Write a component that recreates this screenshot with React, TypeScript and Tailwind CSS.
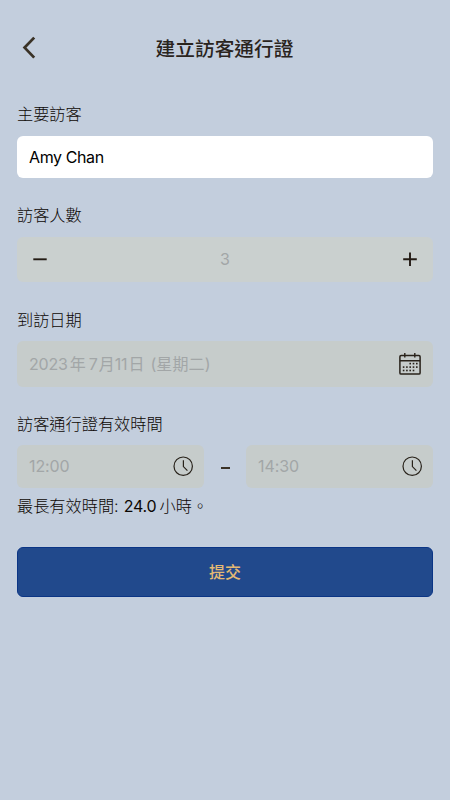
import { ReactNode, useState } from "react";

type FieldProps = {
	label: string;
	className?: string;
	children: ReactNode;
};

const Field = ({ label, className = "", children }: FieldProps) => {
	return (
		<section className={className}>
			<h2 className="h-6 text-[16.2px] leading-6 font-light text-[#0c0703]">{label}</h2>
			{children}
		</section>
	);
};

const BackIcon = () => (
	<svg width="14" height="24" viewBox="0 0 14 24" fill="none">
		<path d="M12.2 1.6 2.6 11.6l9.6 10" stroke="#3a3226" strokeWidth="2.8" />
	</svg>
);

const MinusIcon = () => (
	<svg width="14" height="14" viewBox="0 0 14 14" fill="none">
		<path d="M0.3 7.3h13.4" stroke="#231b14" strokeWidth="1.9" />
	</svg>
);

const PlusIcon = () => (
	<svg width="14" height="14" viewBox="0 0 14 14" fill="none">
		<path d="M0.2 7.3h13.6M7 0.5v13.5" stroke="#231b14" strokeWidth="1.9" />
	</svg>
);

// Filled days of the little calendar, one array of x positions per row
const calendarDays = [
	{ y: 10.6, xs: [10.5, 13.8, 17.1] },
	{ y: 14.1, xs: [3.9, 7.2, 10.5, 13.8, 17.1] },
	{ y: 17.5, xs: [3.9, 7.2, 10.5, 13.8] },
];

const CalendarIcon = () => (
	<svg width="22" height="22" viewBox="0 0 22 22" fill="none">
		<rect x="0.9" y="2.6" width="20.2" height="18.5" rx="1.2" stroke="#28221a" strokeWidth="1.5" />
		<path d="M0.9 7.8h20.2M5.8 0v4.6M15.8 0v4.6" stroke="#28221a" strokeWidth="1.4" />
		{calendarDays.map((row) =>
			row.xs.map((x) => (
				<rect key={`${x}-${row.y}`} x={x - 0.1} y={row.y - 0.8} width="1.6" height="1.6" fill="#28221a" />
			)),
		)}
	</svg>
);

const ClockIcon = () => (
	<svg width="20" height="20" viewBox="0 0 20 20" fill="none">
		<circle cx="10.2" cy="10.2" r="9.2" stroke="#28221a" strokeWidth="1.2" />
		<path d="M10.4 4.2v6.4l4 4" stroke="#28221a" strokeWidth="1.2" />
	</svg>
);

const TimeBox = ({ value }: { value: string }) => (
	<div className="flex h-[43px] w-[187px] items-center justify-between rounded-md bg-[#c6cccb] pb-px pl-3 pr-[11px] text-[#a2a6a7]">
		<span className="tracking-[-0.1px]">{value}</span>
		<ClockIcon />
	</div>
);

export default function App() {
	const [name, setName] = useState("Amy Chan");

	return (
		<main className="h-[800px] w-[450px] bg-[#c3cedd] font-[Inter,'Noto_Sans_CJK_TC',sans-serif] text-base text-[#2a241d]">
			<header className="grid h-[97px] grid-cols-[60px_1fr_60px] items-center">
				<button type="button" className="-mt-[2px] pl-[22px]" aria-label="返回">
					<BackIcon />
				</button>
				<h1 className="pt-[3px] pr-px text-center text-[19.7px] font-medium">建立訪客通行證</h1>
			</header>
			<div className="px-[17px] pt-[5px]">
				<Field label="主要訪客">
					<input
						className="mt-[10px] block h-[42px] w-full rounded-md bg-white px-3 tracking-[-0.4px] text-black outline-none"
						value={name}
						onChange={(e) => setName(e.target.value)}
					/>
				</Field>
				<Field label="訪客人數" className="mt-[25px]">
					<div className="mt-[10px] flex h-[45px] items-center justify-between rounded-md bg-[#cad0cf] px-4 pb-px">
						<MinusIcon />
						<span className="text-[#a2a6a7]">3</span>
						<PlusIcon />
					</div>
				</Field>
				<Field label="到訪日期" className="mt-[26px]">
					<div className="mt-[9px] flex h-[46px] items-center justify-between rounded-md bg-[#c6cccb] pb-px pl-3 pr-[12px] text-[#a2a6a7]">
						<div className="flex">
							<span className="tracking-[-0.2px]">2023</span>
							<span className="ml-[2px]">年</span>
							<span className="ml-[3px]">7</span>
							<span className="ml-px">月</span>
							<span className="tracking-[-0.2px]">11</span>
							<span className="ml-px">日</span>
							<span className="ml-[6px] tracking-[0.1px]">(星期二)</span>
						</div>
						<CalendarIcon />
					</div>
				</Field>
				<Field label="訪客通行證有效時間" className="mt-[25px]">
					<div className="mt-[9px] flex items-center justify-between">
						<TimeBox value="12:00" />
						<span className="mt-[3px] h-[2px] w-[9px] bg-[#3a3226]" />
						<TimeBox value="14:30" />
					</div>
				</Field>
				<p className="mt-[6px] flex h-6 leading-6 font-light text-[#0c0703]">
					<span className="text-[16.2px]">最長有效時間:</span>
					<span className="ml-[5px] font-normal tracking-[-0.2px]">24.0</span>
					<span className="ml-[3px] text-[16.2px]">小時。</span>
				</p>
				<button
					type="button"
					className="mt-[29px] block h-[50px] w-full rounded-md border border-[#0b3585] bg-[#21498c] font-medium text-[#e5ba74]"
				>
					提交
				</button>
			</div>
		</main>
	);
}
